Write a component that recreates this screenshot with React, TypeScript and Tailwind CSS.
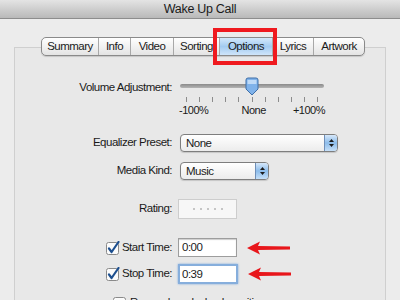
import React from "react";

const tabs = [
  { label: "Summary", w: "w-[56px]" },
  { label: "Info", w: "w-[32px]" },
  { label: "Video", w: "w-[43px]" },
  { label: "Sorting", w: "w-[46px]" },
  { label: "Options", w: "w-[53px]", active: true },
  { label: "Lyrics", w: "w-[41px]" },
  { label: "Artwork", w: "w-[51px]" },
];

function Check({ on = true }: { on?: boolean }) {
  return (
    <svg width="14" height="14" viewBox="0 0 14 14" className="shrink-0">
      <rect x="0.5" y="1.5" width="12" height="12" rx="2" fill="#fbfbfb" stroke="#8a8a8a" />
      {on && (
        <path d="M3 7.5 L5.6 11 L12.5 1" fill="none" stroke="#1d4f8f" strokeWidth="2.2" strokeLinecap="round" strokeLinejoin="round" />
      )}
    </svg>
  );
}

function RedArrow() {
  return (
    <svg width="44" height="14" viewBox="0 0 44 14" className="ml-[10px]">
      <path d="M0 7 L13 0.5 L11 5 L43 5.5 L43 8.5 L11 9 L13 13.5 Z" fill="#e8161b" />
    </svg>
  );
}

function Select({ value, w }: { value: string; w: string }) {
  return (
    <div className={`${w} h-[18px] flex rounded-[4px] border border-[#7e7e7e] bg-gradient-to-b from-white to-[#ececec] shadow-[0_1px_1px_rgba(0,0,0,0.15)] overflow-hidden`}>
      <div className="flex-1 pl-[5px] leading-[16px]">{value}</div>
      <div className="w-[13px] border-l border-[#6f8fb8] bg-gradient-to-b from-[#d6e8fa] via-[#8cbcea] to-[#c6e0f8] flex flex-col items-center justify-center gap-[2px]">
        <svg width="5" height="3" viewBox="0 0 5 3"><path d="M0 3 L2.5 0 L5 3 Z" fill="#1b1b1b" /></svg>
        <svg width="5" height="3" viewBox="0 0 5 3"><path d="M0 0 L2.5 3 L5 0 Z" fill="#1b1b1b" /></svg>
      </div>
    </div>
  );
}

export default function App() {
  return (
    <div className="w-[400px] h-[300px] overflow-hidden bg-[#ececec] text-[11.5px] tracking-[-0.5px] text-[#1a1a1a] font-['Liberation_Sans',Arial,sans-serif]">
      <div className="h-[19px] bg-gradient-to-b from-[#e4e4e4] to-[#b9b9b9] border-b border-[#8d8d8d] text-center leading-[18px] text-[12.5px] tracking-[-0.3px]">
        Wake Up Call
      </div>

      <div className="relative">
        <div className="flex pl-[41px] pt-[18px] relative z-10">
          <div className="flex h-[19px] rounded-[5px] border border-[#8a8a8a] bg-gradient-to-b from-white to-[#e4e4e4] shadow-[0_1px_1px_rgba(0,0,0,0.15)] overflow-hidden">
            {tabs.map((t, i) => (
              <div
                key={t.label}
                className={`${t.w} text-center leading-[17px] ${i > 0 ? "border-l border-[#a8a8a8]" : ""} ${
                  t.active ? "bg-gradient-to-b from-[#d4e9fb] via-[#a3cbf0] to-[#cfe5fa]" : ""
                }`}
              >
                {t.label}
              </div>
            ))}
          </div>
        </div>

        <div className="absolute left-[213px] top-[9px] w-[64px] h-[37px] border-[4px] border-[#ef1a1f] z-20" />

        <div className="ml-[14px] w-[372px] h-[260px] -mt-[9px] border border-[#cfcfcf] bg-[#e8e8e8]">
          <div className="pt-[30px] flex">
            <div className="w-[157px] text-right leading-[14px] pt-[2px]">Volume Adjustment:</div>
            <div className="ml-[8px] w-[144px]">
              <div className="relative h-[18px]">
                <div className="absolute left-0 right-0 top-[6px] h-[4px] rounded-full bg-gradient-to-b from-[#8a8a8a] to-[#b4b4b4]" />
                <svg width="14" height="19" viewBox="0 0 14 19" className="absolute left-[65px] -top-[1px]">
                  <path d="M1 3 Q1 1 3 1 L11 1 Q13 1 13 3 L13 12 L7 18 L1 12 Z" fill="#7fb2ea" stroke="#3f6fa8" strokeWidth="1" />
                  <path d="M2.5 3 L11.5 3 L11.5 7 L2.5 7 Z" fill="#cfe4fa" opacity="0.8" />
                </svg>
              </div>
              <svg width="144" height="6" viewBox="0 0 144 6" className="mt-[1px]">
                {[6, 19, 32, 45, 58, 72, 85, 98, 111, 124, 137].map((x) => (
                  <line key={x} x1={x + 0.5} y1="0" x2={x + 0.5} y2="5" stroke="#8c8c8c" strokeWidth="1" />
                ))}
              </svg>
              <div className="flex justify-between text-[11px] leading-[12px] mt-[1px] -ml-[1px] -mr-[1px]">
                <span>-100%</span>
                <span className="pl-[6px]">None</span>
                <span>+100%</span>
              </div>
            </div>
          </div>

          <div className="flex items-center mt-[18px]">
            <div className="w-[157px] text-right">Equalizer Preset:</div>
            <div className="ml-[8px]">
              <Select value="None" w="w-[158px]" />
            </div>
          </div>

          <div className="flex items-center mt-[10px]">
            <div className="w-[157px] text-right">Media Kind:</div>
            <div className="ml-[8px]">
              <Select value="Music" w="w-[89px]" />
            </div>
          </div>

          <div className="flex items-center mt-[19px]">
            <div className="w-[157px] text-right">Rating:</div>
            <div className="ml-[6px] w-[59px] h-[20px] border border-[#cdcdcd] bg-[#f7f7f7] flex items-center justify-center gap-[5px]">
              {[0, 1, 2, 3, 4].map((d) => (
                <span key={d} className="w-[2px] h-[2px] rounded-full bg-[#b5b5b5]" />
              ))}
            </div>
          </div>

          <div className="flex items-center mt-[19px]">
            <div className="w-[157px] flex justify-end items-center gap-[2px]">
              <Check />
              <span>Start Time:</span>
            </div>
            <div className="ml-[6px] w-[59px] h-[19px] border border-[#9d9d9d] bg-white shadow-[inset_0_1px_1px_rgba(0,0,0,0.2)] pl-[3px] leading-[17px]">
              0:00
            </div>
            <RedArrow />
          </div>

          <div className="flex items-center mt-[7px]">
            <div className="w-[157px] flex justify-end items-center gap-[2px]">
              <Check />
              <span>Stop Time:</span>
            </div>
            <div className="ml-[6px] w-[60px] h-[20px] border-2 border-[#86aedc] bg-white shadow-[0_0_2px_#7aa7dd] pl-[2px] leading-[16px]">
              0:39
            </div>
            <RedArrow />
          </div>

          <div className="flex items-center mt-[10px] pl-[98px] gap-[3px]">
            <Check on={false} />
            <span>Remember playback position</span>
          </div>
        </div>
      </div>
    </div>
  );
}
